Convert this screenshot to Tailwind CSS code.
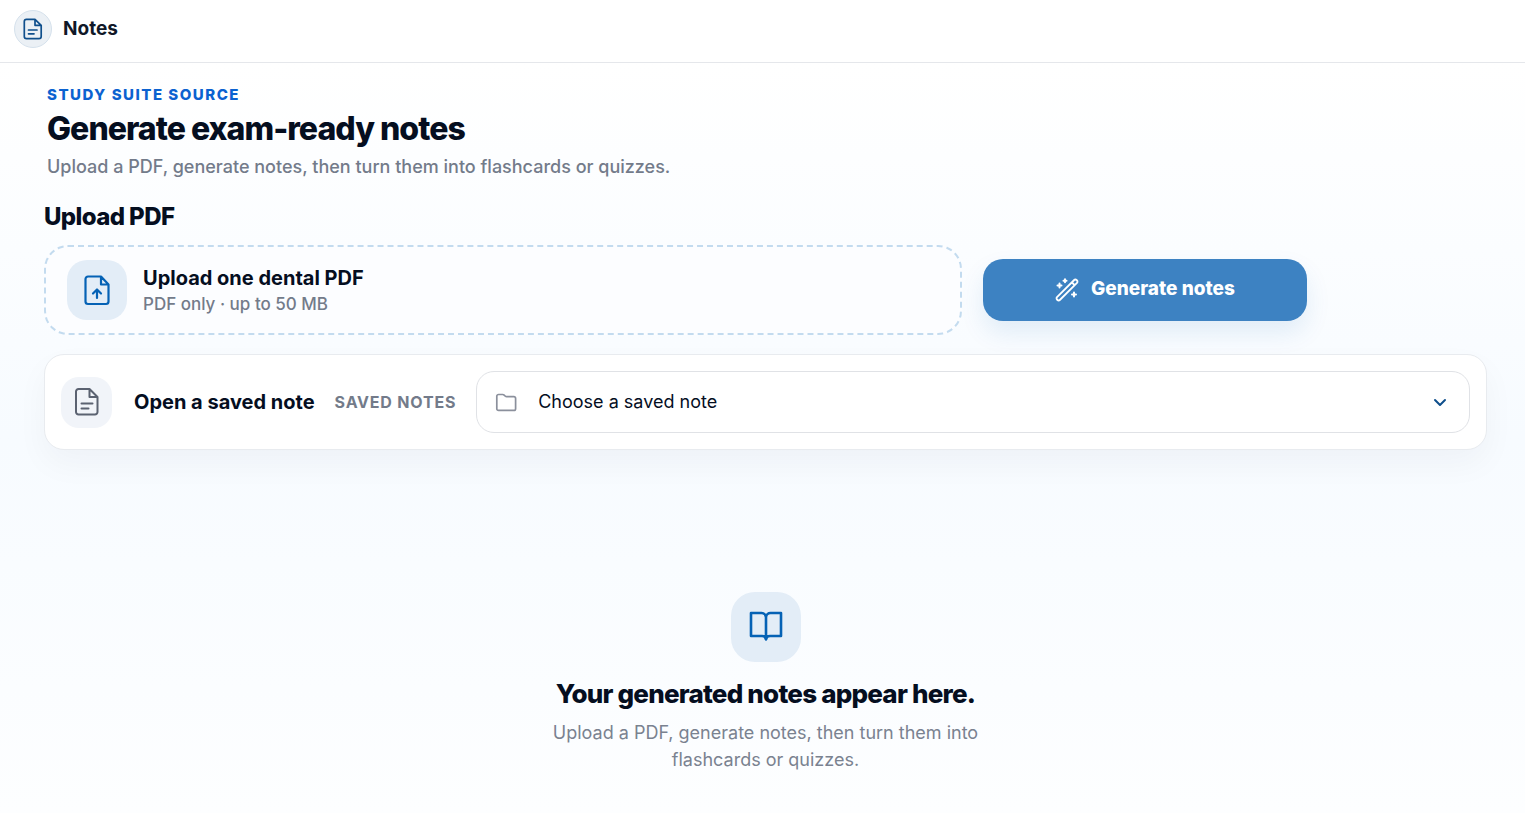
<!DOCTYPE html>
<html lang="en">
<head>
<meta charset="utf-8">
<meta name="viewport" content="width=device-width, initial-scale=1">
<title>Notes</title>
<script src="https://cdn.jsdelivr.net/npm/@tailwindcss/browser@4"></script>
</head>
<body class="flex min-h-screen flex-col bg-white font-['Inter',sans-serif] text-[#050e1f]">
<header class="flex h-[63px] items-center gap-[11px] border-b border-[#e5e7eb] bg-white px-3.5 pb-1">
  <span class="flex size-[38px] items-center justify-center rounded-full border border-[#d5e1ec] bg-[#ebf0f5] text-[#0f4f8c]">
    <svg class="size-6" viewBox="0 0 24 24" fill="none" stroke="currentColor" stroke-width="1.7" stroke-linecap="round" stroke-linejoin="round" aria-hidden="true"><path d="M14 2.300H5.500a2.200 2.200 0 0 0-2.200 2.200v15a2.200 2.200 0 0 0 2.200 2.200h12.500a2.200 2.200 0 0 0 2.200-2.200V8.300zM14 2.300v6h6.200M7.500 13h8.500M7.500 16.800h5.500"/></svg>
  </span>
  <span class="text-[19px] leading-7 font-bold text-[#101828]">Notes</span>
</header>
<main class="flex flex-1 flex-col bg-linear-to-b from-white via-[#f7fbff] to-[#fdfeff] pr-[38px] pl-11 pt-[22px] pb-10">
  <section class="pl-[3px]">
    <p class="text-[15px] leading-5 font-extrabold tracking-widest text-[#0b62d0]">STUDY SUITE SOURCE</p>
    <h1 class="mt-1 text-[32px] leading-10 font-extrabold tracking-[-0.03em]">Generate exam-ready notes</h1>
    <p class="mt-1.5 text-lg leading-6 font-medium text-[#737b8a]">Upload a PDF, generate notes, then turn them into flashcards or quizzes.</p>
  </section>
  <section class="mt-[22px] max-w-[1263px]">
    <h2 class="text-2xl leading-8 font-extrabold tracking-tight">Upload PDF</h2>
    <div class="mt-3 grid grid-cols-[1fr_324px] items-center gap-[21px]">
      <label class="flex h-[90px] cursor-pointer items-center gap-4 rounded-3xl border-2 border-dashed border-[#c3dbef] bg-[#fcfdff] px-[21px]">
        <input type="file" accept="application/pdf" class="sr-only">
        <span class="flex size-[60px] items-center justify-center rounded-[20px] bg-[#e3edf7] text-[#0562b5]">
          <svg class="size-8" viewBox="0 0 32 32" fill="none" stroke="currentColor" stroke-width="2.200" stroke-linecap="round" stroke-linejoin="round" aria-hidden="true"><path d="M20 2.500H7a2.500 2.500 0 0 0-2.500 2.500v22.500a2.500 2.500 0 0 0 2.500 2.500h18a2.500 2.500 0 0 0 2.500-2.500V10.500zM20 2.500v8h7.500M16 24v-8M12 19.500l4-4 4 4"/></svg>
        </span>
        <span class="flex flex-col">
          <span class="text-xl leading-7 font-bold">Upload one dental PDF</span>
          <span class="text-[17px] leading-6 font-medium text-[#737b8a]">PDF only · up to 50 MB</span>
        </span>
      </label>
      <button type="button" class="flex h-[62px] items-center justify-center gap-3 rounded-[20px] bg-[#3d82c2] pb-0.5 text-[19px] font-extrabold text-white shadow-[0_12px_24px_rgba(5,98,181,0.1)]">
        <svg class="mt-0.5 size-6" viewBox="0 0 24 24" fill="none" stroke="currentColor" stroke-width="1.800" stroke-linecap="round" stroke-linejoin="round" aria-hidden="true"><path d="M2 19.200 19.200 2a1.600 1.600 0 0 1 2.300 0l.5.5a1.600 1.600 0 0 1 0 2.300L4.800 22a1.600 1.600 0 0 1-2.300 0l-.5-.5a1.600 1.600 0 0 1 0-2.300zM17 4.500l2.500 2.500"/><path stroke-width="2" d="M4.500 5.500v4M2.500 7.500h4M10 1.300v3M8.500 2.800h3M19 14.500v4M17 16.500h4"/></svg>
        Generate notes
      </button>
    </div>
  </section>
  <section class="mt-[19px] flex h-24 items-center rounded-[20px] border border-[#e8ebef] bg-white px-4 shadow-[0_14px_32px_rgba(15,23,42,0.04)]">
    <span class="flex size-[51px] shrink-0 items-center justify-center rounded-[18px] bg-[#f1f4f9] text-[#5b6271]">
      <svg class="size-8" viewBox="0 0 32 32" fill="none" stroke="currentColor" stroke-width="2" stroke-linecap="round" stroke-linejoin="round" aria-hidden="true"><path d="M18.500 3H7.500A2.500 2.500 0 0 0 5 5.500v20.500a2.500 2.500 0 0 0 2.500 2.500h16.500a2.500 2.500 0 0 0 2.500-2.500V11zM18.500 3v8h8M10.500 17.500h11M10.500 22.500h7"/></svg>
    </span>
    <h2 class="ml-[22px] text-xl font-bold whitespace-nowrap">Open a saved note</h2>
    <label for="saved" class="ml-5 text-base font-bold tracking-wider whitespace-nowrap text-[#737b8a]">SAVED NOTES</label>
    <div class="ml-5 flex h-[62px] flex-1 items-center rounded-[18px] border border-[#e0e2e6] bg-white px-[17px]">
      <svg class="size-6 shrink-0 text-[#8b909c]" viewBox="0 0 24 24" fill="none" stroke="currentColor" stroke-width="1.700" stroke-linecap="round" stroke-linejoin="round" aria-hidden="true"><path d="M2.800 18.700V6.200a1.700 1.700 0 0 1 1.700-1.700h4.200a2 2 0 0 1 1.300.5l1.300 1.200a2 2 0 0 0 1.300.5h7.300a1.700 1.700 0 0 1 1.700 1.700v10.300a1.700 1.700 0 0 1-1.700 1.700H4.500a1.700 1.700 0 0 1-1.700-1.700z"/></svg>
      <select id="saved" class="h-full flex-1 appearance-none bg-transparent pl-5 text-lg text-[#050e1f] outline-none"><option>Choose a saved note</option></select>
      <svg class="size-6 shrink-0 text-[#0f4f8c]" viewBox="0 0 24 24" fill="none" stroke="currentColor" stroke-width="2" stroke-linecap="round" stroke-linejoin="round" aria-hidden="true"><path d="m7 10 5 5 5-5"/></svg>
    </div>
  </section>
  <section class="mt-[142px] flex flex-col items-center text-center">
    <span class="flex size-[70px] items-center justify-center rounded-3xl bg-[#e3edf7] text-[#0562b5]">
      <svg class="size-9" viewBox="0 0 36 36" fill="none" stroke="currentColor" stroke-width="2.600" stroke-linecap="round" stroke-linejoin="round" aria-hidden="true"><path d="M18 8a4.500 4.500 0 0 0-4.500-4H3v23h11a4 4 0 0 1 4 3.500 4 4 0 0 1 4-3.500h11V4H22.500A4.500 4.500 0 0 0 18 8zv22.500"/></svg>
    </span>
    <h2 class="mt-4 text-[26px] leading-8 font-extrabold tracking-[-0.03em]">Your generated notes appear here.</h2>
    <p class="mt-[9px] max-w-[450px] text-lg leading-[27px] text-[#7a8290]">Upload a PDF, generate notes, then turn them into flashcards or quizzes.</p>
  </section>
</main>
</body>
</html>
